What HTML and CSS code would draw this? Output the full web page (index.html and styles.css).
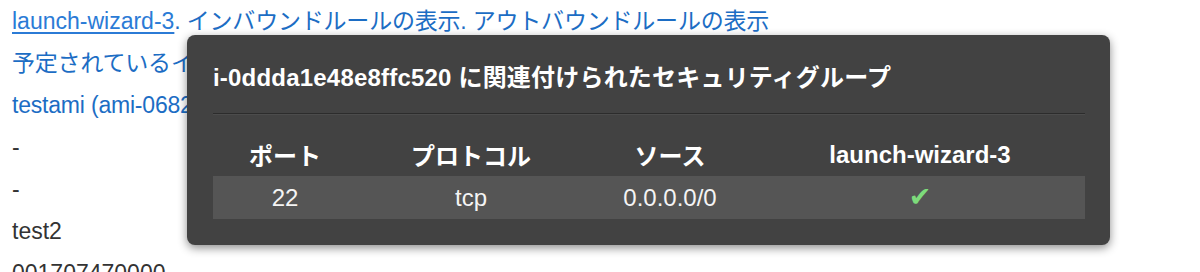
FILE: index.html
```html
<!DOCTYPE html>
<html lang="ja">
<head>
<meta charset="utf-8">
<link rel="stylesheet" href="styles.css">
</head>
<body>
<div class="details">
  <div class="line blue"><a class="link" href="#">launch-wizard-3</a>. インバウンドルールの表示. アウトバウンドルールの表示</div>
  <div class="line blue">予定されているイベントはありません</div>
  <div class="line blue">testami (ami-06829d8fa3f0c9d26)</div>
  <div class="line">-</div>
  <div class="line">-</div>
  <div class="line">test2</div>
  <div class="line">001707470000</div>
</div>
<div class="popover">
  <div class="pop-title">i-0ddda1e48e8ffc520 に関連付けられたセキュリティグループ</div>
  <div class="pop-sep"></div>
  <table class="rules">
    <colgroup>
      <col class="c1"><col class="c2"><col class="c3"><col class="c4">
    </colgroup>
    <thead>
      <tr><th>ポート</th><th>プロトコル</th><th>ソース</th><th>launch-wizard-3</th></tr>
    </thead>
    <tbody>
      <tr class="band"><td>22</td><td>tcp</td><td>0.0.0.0/0</td><td><span class="check">✔</span></td></tr>
    </tbody>
  </table>
</div>
</body>
</html>
```
FILE: styles.css
```css
html, body {
  margin: 0;
  padding: 0;
  background: #ffffff;
}
body {
  font-family: "Liberation Sans", "Noto Sans CJK JP", sans-serif;
  font-size: 23px;
  color: #333333;
  width: 1200px;
  height: 272px;
  overflow: hidden;
  position: relative;
}
.details {
  padding-left: 12px;
}
.line {
  line-height: 42px;
  white-space: nowrap;
}
.blue {
  color: #1c6dc4;
  letter-spacing: -0.2px;
}
.link {
  color: #2b7bd6;
  letter-spacing: 0;
  text-decoration: underline;
  text-underline-offset: 3px;
}
.popover {
  position: absolute;
  left: 187px;
  top: 35px;
  width: 923px;
  box-sizing: border-box;
  padding: 28px 25px 26px 26px;
  background: #424242;
  border-radius: 8px;
  box-shadow: 0 3px 10px rgba(0, 0, 0, 0.45);
  color: #ffffff;
}
.pop-title {
  font-size: 24px;
  font-weight: bold;
  line-height: 30px;
  white-space: nowrap;
  letter-spacing: 0.2px;
}
.pop-sep {
  margin-top: 20px;
  height: 1px;
  border-top: 1px solid #2c2c2c;
  background: #4c4c4c;
}
.rules {
  margin-top: 18px;
  width: 872px;
  border-collapse: collapse;
  table-layout: fixed;
  font-size: 24px;
}
.c1 { width: 144px; }
.c2 { width: 228px; }
.c3 { width: 170px; }
.c4 { width: 330px; }
.rules th, .rules td {
  height: 43px;
  padding: 0;
  text-align: center;
  vertical-align: middle;
  white-space: nowrap;
}
.rules th {
  font-weight: bold;
  color: #ffffff;
}
.rules td {
  color: #f4f4f4;
}
.band {
  background: #555555;
}
.check {
  font-family: "DejaVu Sans", sans-serif;
  color: #7ddb7b;
  font-size: 27px;
  line-height: 1;
}
```
